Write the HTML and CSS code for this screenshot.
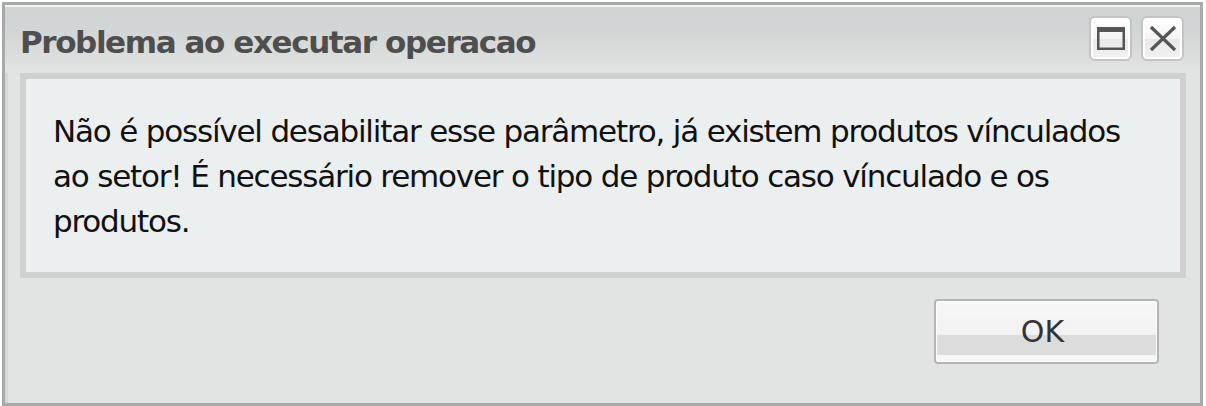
FILE: index.html
```html
<!DOCTYPE html>
<html lang="pt-BR">
<head>
<meta charset="utf-8">
<title>Problema ao executar operacao</title>
<link rel="stylesheet" href="styles.css">
</head>
<body>
<div class="window">

  <div class="window-header">
    <span class="window-title">Problema ao executar operacao</span>
    <div class="window-tools">
      <button class="tool-btn" type="button" title="Maximizar">
        <svg width="28" height="23" viewBox="0 0 28 23"><rect x="1.25" y="2" width="25.5" height="19.75" fill="none" stroke="#555" stroke-width="2.5"/><rect x="0" y="0" width="28" height="5" fill="#555"/></svg>
      </button>
      <button class="tool-btn" type="button" title="Fechar">
        <svg width="28" height="27" viewBox="0 0 28 27"><path d="M2 2 L26 25 M26 2 L2 25" stroke="#555" stroke-width="3.2"/></svg>
      </button>
    </div>
  </div>

  <div class="message-panel">
    <p class="message-text">Não é possível desabilitar esse parâmetro, já existem produtos vínculados ao setor! É necessário remover o tipo de produto caso vínculado e os produtos.</p>
  </div>

  <div class="window-footer">
    <button class="ok-btn" type="button">OK</button>
  </div>

</div>
</body>
</html>
```

FILE: styles.css
```css
body {
  margin: 0;
  background: #fff;
  font-family: "DejaVu Sans", Verdana, sans-serif;
}
.window {
  display: flex;
  flex-direction: column;
  box-sizing: border-box;
  width: 1201px;
  height: 404px;
  margin: 2px 0 0 2px;
  background: #e2e3e3;
  border: 3px solid #a8a9a9;
  box-shadow: inset 3px 2px 0 #d6d8d8;
}
.window-header {
  display: flex;
  align-items: center;
  justify-content: space-between;
  height: 68px;
  padding: 0 16px 0 15px;
  background: linear-gradient(#d0d4d4 0, #d2d5d5 22px, #e0e1e1 60px, #e2e3e3 68px);
  border-top: 2px solid #f2f4f4;
  box-sizing: border-box;
}
.window-title {
  font-size: 31px;
  font-weight: bold;
  color: #4e4e4e;
  letter-spacing: -1.4px;
  margin-top: 4px;
}
.window-tools {
  display: flex;
  gap: 9px;
  margin-top: -4px;
}
.tool-btn {
  display: flex;
  align-items: center;
  justify-content: center;
  width: 43px;
  height: 45px;
  padding: 0;
  background: linear-gradient(#ffffff 0, #f4f4f4 50%, #e8e8e8 51%, #f2f2f2 100%);
  border: 2px solid #c4c4c4;
  border-radius: 6px;
  box-shadow: inset 0 0 0 2px #fff;
  cursor: pointer;
}
.message-panel {
  margin: 0 14px 0 15px;
  height: 205px;
  box-sizing: border-box;
  background: #ebeff0;
  border: 6px solid #d0d0d0;
}
.message-text {
  margin: 0;
  padding: 30px 40px 0 27px;
  font-size: 31px;
  line-height: 45px;
  letter-spacing: -1.2px;
  color: #111;
}
.window-footer {
  display: flex;
  justify-content: flex-end;
  padding: 21px 41px 0 0;
}
.ok-btn {
  width: 225px;
  height: 65px;
  padding: 0 8px 0 0;
  font-family: "DejaVu Sans", Verdana, sans-serif;
  font-size: 30px;
  color: #333;
  background: linear-gradient(#f7f7f7 0, #f2f2f2 55%, #dcdcdc 56%, #dcdcdc 88%, #f6f6f6 89%);
  border: 2px solid #b4b4b4;
  border-radius: 4px;
  box-shadow: inset 0 0 0 1px #fff;
  cursor: pointer;
}
```
